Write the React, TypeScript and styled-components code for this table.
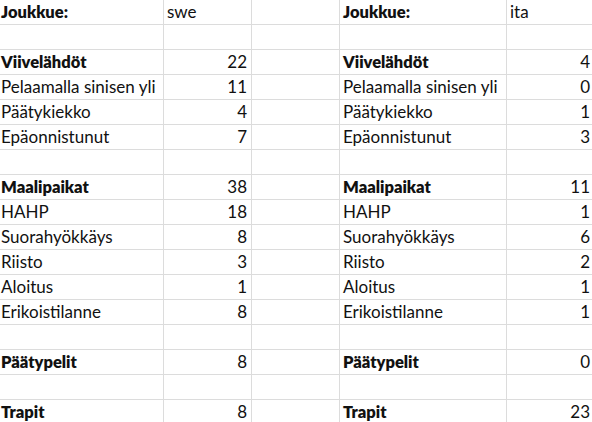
import React from "react";
import styled, { createGlobalStyle } from "styled-components";

const GlobalStyle = createGlobalStyle`
  html, body {
    margin: 0;
    padding: 0;
    background: #ffffff;
    overflow: hidden;
  }
  body {
    font-family: Lato, "Liberation Sans", sans-serif;
  }
`;

type Line = [string, string, boolean?];

const swe: Line[] = [
  ["Joukkue:", "swe", true],
  ["", ""],
  ["Viivelähdöt", "22", true],
  ["Pelaamalla sinisen yli", "11"],
  ["Päätykiekko", "4"],
  ["Epäonnistunut", "7"],
  ["", ""],
  ["Maalipaikat", "38", true],
  ["HAHP", "18"],
  ["Suorahyökkäys", "8"],
  ["Riisto", "3"],
  ["Aloitus", "1"],
  ["Erikoistilanne", "8"],
  ["", ""],
  ["Päätypelit", "8", true],
  ["", ""],
  ["Trapit", "8", true],
];

const ita: Line[] = [
  ["Joukkue:", "ita", true],
  ["", ""],
  ["Viivelähdöt", "4", true],
  ["Pelaamalla sinisen yli", "0"],
  ["Päätykiekko", "1"],
  ["Epäonnistunut", "3"],
  ["", ""],
  ["Maalipaikat", "11", true],
  ["HAHP", "1"],
  ["Suorahyökkäys", "6"],
  ["Riisto", "2"],
  ["Aloitus", "1"],
  ["Erikoistilanne", "1"],
  ["", ""],
  ["Päätypelit", "0", true],
  ["", ""],
  ["Trapit", "23", true],
];

function App() {
  return (
    <>
      <GlobalStyle />
      <Sheet>
        {swe.map((row, i) => {
          const other = ita[i];
          const header = i === 0;
          return (
            <React.Fragment key={i}>
              <Cell $bold={row[2]} $first>{row[0]}</Cell>
              <Cell $right={!header}>{row[1]}</Cell>
              <Cell />
              <Cell $bold={other[2]}>{other[0]}</Cell>
              <Cell $right={!header}>{other[1]}</Cell>
            </React.Fragment>
          );
        })}
      </Sheet>
    </>
  );
}

export default App;

const Sheet = styled.div`
  display: grid;
  grid-template-columns: 164px 88px 88px 167px 88px;
  grid-auto-rows: 25px;
  width: 605px;
  color: #111111;
`;

const Cell = styled.div<{ $bold?: boolean; $right?: boolean; $first?: boolean }>`
  display: flex;
  align-items: flex-end;
  justify-content: ${(p) => (p.$right ? "flex-end" : "flex-start")};
  padding: 0 ${(p) => (p.$right ? "4px" : "3px")} 4px ${(p) => (p.$first ? "1px" : "3px")};
  border-right: 1px solid #dcdcdc;
  border-bottom: 1px solid #dcdcdc;
  font-size: ${(p) => (p.$bold ? "16.5px" : "17px")};
  font-weight: ${(p) => (p.$bold ? 800 : 400)};
  line-height: 16px;
  white-space: nowrap;
  overflow: hidden;
`;
